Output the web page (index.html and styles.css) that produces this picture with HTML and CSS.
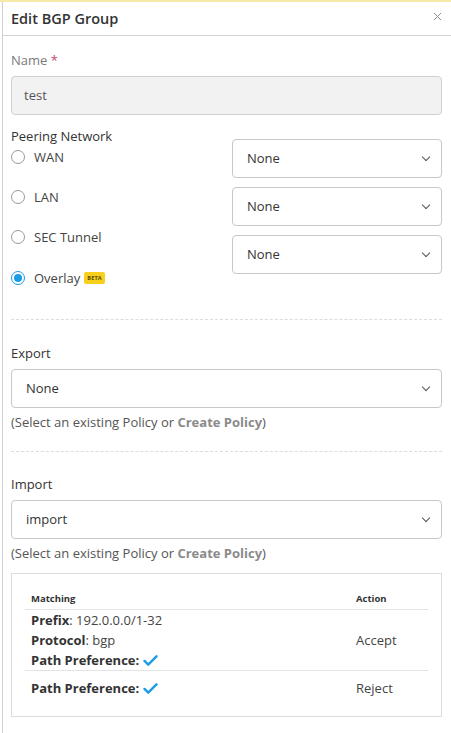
FILE: index.html
```html
<!DOCTYPE html>
<html lang="en">
<head>
    <meta charset="UTF-8">
    <meta name="viewport" content="width=device-width, initial-scale=1.0">
    <title>Edit BGP Group</title>
    <link rel="stylesheet" href="styles.css">
</head>
<body>
    <div class="modal">
        <header class="modal-header">
            <h1>Edit BGP Group</h1>
            <svg class="close" viewBox="0 0 10 10"><path d="M1 1l8 8M9 1l-8 8" stroke="#8c8c8c" stroke-width="1.1" fill="none"/></svg>
        </header>
        <main class="modal-body">
            <label class="field-label muted">Name <span class="req">*</span></label>
            <div class="input disabled">test</div>

            <div class="peering">
                <div class="peering-left">
                    <label class="field-label">Peering Network</label>
                    <div class="radio"><span class="dot"></span>WAN</div>
                    <div class="radio"><span class="dot"></span>LAN</div>
                    <div class="radio"><span class="dot"></span>SEC Tunnel</div>
                    <div class="radio"><span class="dot checked"></span>Overlay <span class="beta">BETA</span></div>
                </div>
                <div class="peering-right">
                    <div class="select">None<span class="chev"></span></div>
                    <div class="select">None<span class="chev"></span></div>
                    <div class="select">None<span class="chev"></span></div>
                </div>
            </div>

            <hr class="dashed">

            <label class="field-label">Export</label>
            <div class="select">None<span class="chev"></span></div>
            <p class="help">(Select an existing Policy or <b>Create Policy</b>)</p>

            <hr class="dashed">

            <label class="field-label">Import</label>
            <div class="select">import<span class="chev"></span></div>
            <p class="help">(Select an existing Policy or <b>Create Policy</b>)</p>

            <div class="policy">
                <table>
                    <thead>
                        <tr><th>Matching</th><th class="act">Action</th></tr>
                    </thead>
                    <tbody>
                        <tr class="first">
                            <td>
                                <div><b>Prefix</b>: 192.0.0.0/1-32</div>
                                <div><b>Protocol</b>: bgp</div>
                                <div><b>Path Preference:</b> <svg class="tick" viewBox="0 0 16 12"><path d="M1.5 6.5l4 4L14.5 1.5" fill="none" stroke="#1c9be6" stroke-width="2.6" stroke-linecap="round" stroke-linejoin="round"/></svg></div>
                            </td>
                            <td class="act">Accept</td>
                        </tr>
                        <tr class="second">
                            <td><div><b>Path Preference:</b> <svg class="tick" viewBox="0 0 16 12"><path d="M1.5 6.5l4 4L14.5 1.5" fill="none" stroke="#1c9be6" stroke-width="2.6" stroke-linecap="round" stroke-linejoin="round"/></svg></div></td>
                            <td class="act">Reject</td>
                        </tr>
                    </tbody>
                </table>
            </div>
        </main>
    </div>
</body>
</html>
```

FILE: styles.css
```css
body {
    margin: 0;
    font-family: "Open Sans", Arial, sans-serif;
    font-size: 13px;
    color: #333;
    background: #fff;
    border-top: 2px solid #f7e9a6;
}
.modal {
    margin-left: 2px;
    border-left: 1px solid #cfcfcf;
    min-height: 731px;
}
.modal-header {
    display: flex;
    justify-content: space-between;
    align-items: center;
    height: 33px;
    padding: 0 9px 0 8px;
    border-bottom: 1px solid #d4d4d4;
}
.modal-header h1 {
    margin: 0;
    font-size: 14.5px;
    font-weight: 600;
    color: #333;
}
.close {
    width: 9px;
    height: 9px;
    margin-top: -5px;
}
.modal-body {
    padding: 15px 9px 0 8px;
}
.field-label {
    display: block;
    font-size: 13px;
    line-height: 18px;
    margin-bottom: 7px;
}
.muted {
    color: #7a7a7a;
}
.req {
    color: #c9486a;
}
.input {
    height: 39px;
    box-sizing: border-box;
    border: 1px solid #d0d0d0;
    border-radius: 4px;
    padding: 0 12px;
    line-height: 37px;
}
.input.disabled {
    background: #f2f2f3;
    color: #555;
}
.peering {
    display: flex;
    justify-content: space-between;
    margin-top: 12px;
}
.peering-left {
    display: flex;
    flex-direction: column;
}
.peering-left .field-label {
    margin-bottom: 3px;
}
.radio {
    display: flex;
    align-items: center;
    height: 18px;
    margin-bottom: 22px;
    color: #444;
}
.radio:last-child {
    margin-bottom: 0;
    margin-top: 1px;
}
.dot {
    width: 14px;
    height: 14px;
    border: 1px solid #9a9a9a;
    border-radius: 50%;
    margin-right: 9px;
    box-sizing: border-box;
    position: relative;
}
.dot.checked {
    border-color: #1c9be6;
}
.dot.checked::after {
    content: "";
    position: absolute;
    left: 2px;
    top: 2px;
    width: 8px;
    height: 8px;
    border-radius: 50%;
    background: #1c9be6;
}
.beta {
    margin-left: 4px;
    background: #f7cf1c;
    color: #5a4a00;
    font-size: 5.5px;
    font-weight: 700;
    padding: 2px 3px;
    border-radius: 2px;
    letter-spacing: 0.2px;
}
.peering-right {
    width: 210px;
    display: flex;
    flex-direction: column;
    gap: 9px;
    padding-top: 12px;
}
.select {
    position: relative;
    height: 39px;
    box-sizing: border-box;
    border: 1px solid #c8c8c8;
    border-radius: 4px;
    padding: 0 14px;
    line-height: 37px;
    color: #333;
}
.chev {
    position: absolute;
    right: 12px;
    top: 14px;
    width: 5px;
    height: 5px;
    border-right: 1.3px solid #555;
    border-bottom: 1.3px solid #555;
    transform: rotate(45deg);
}
.dashed {
    border: 0;
    border-top: 1px dashed #dcdcdc;
    margin: 20px 0 23px;
}
.peering + .dashed {
    margin-top: 32px;
    margin-bottom: 24px;
}
.help {
    margin: 5px 0 0;
    color: #555;
}
.help b {
    color: #8a8a8a;
    font-weight: 700;
}
.policy {
    margin-top: 11px;
    border: 1px solid #dcdcdc;
    padding: 18px 13px 11px;
}
.policy table {
    width: 100%;
    border-collapse: collapse;
}
.policy th {
    text-align: left;
    font-size: 9.5px;
    font-weight: 700;
    padding: 0 6px 4px;
    border-bottom: 1px solid #e4e4e4;
}
.policy td {
    padding: 0 6px;
    line-height: 20px;
    vertical-align: middle;
    color: #444;
}
.policy .first td {
    border-bottom: 1px solid #e4e4e4;
}
.policy .second td {
    padding-top: 7px;
    padding-bottom: 7px;
}
.policy td b {
    font-weight: 700;
    color: #333;
}
.act {
    width: 66px;
}
.tick {
    width: 15px;
    height: 11px;
    vertical-align: -1px;
}
```
